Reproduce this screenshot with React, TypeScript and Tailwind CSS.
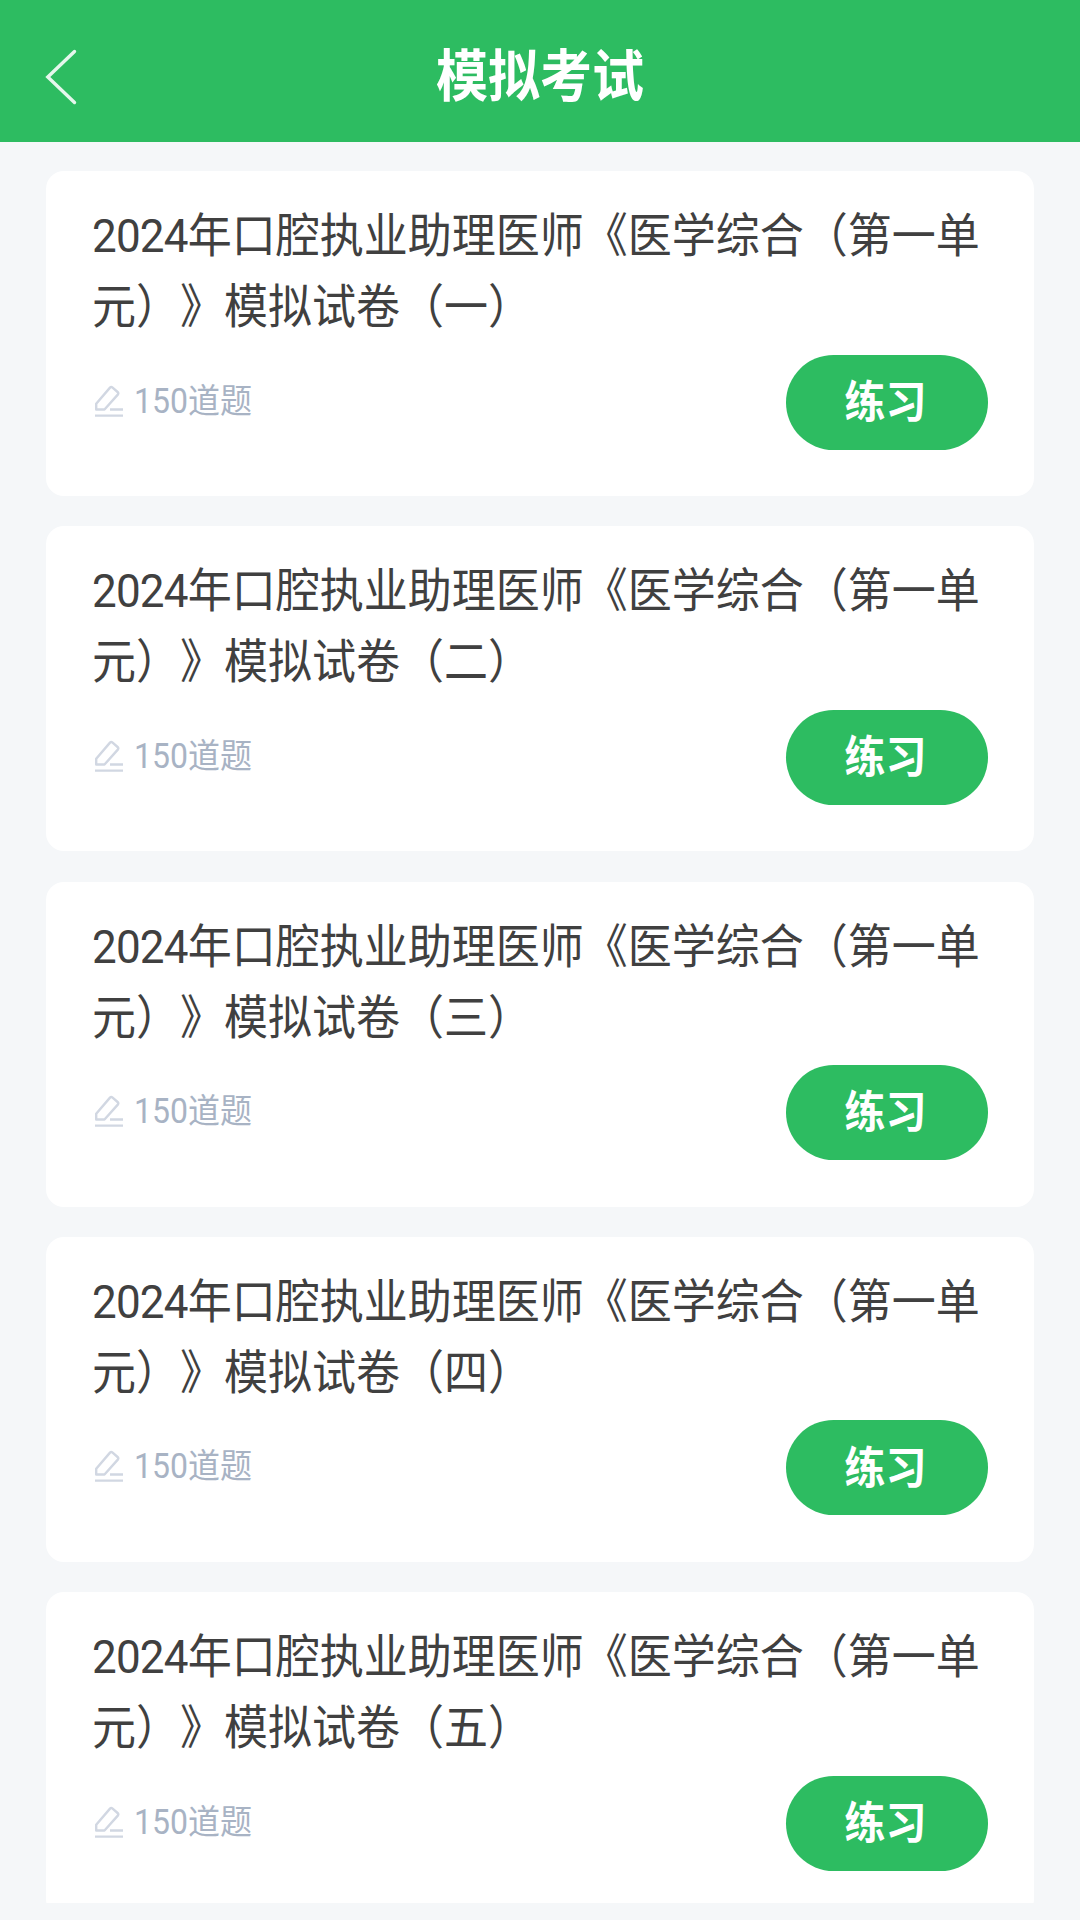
const papers = ["一", "二", "三", "四", "五"];

function BackIcon() {
  return (
    <svg className="w-[32px] h-[56px]" viewBox="0 0 32 56" fill="none" stroke="#fff" strokeOpacity="0.88" strokeWidth="3.4" strokeLinecap="round">
      <path d="M29.5 2.5 2.8 28 29.5 53.5" />
    </svg>
  );
}

function EditIcon() {
  return (
    <svg className="-mt-[3px] w-[30px] h-[32px] shrink-0" viewBox="0 0 30 32" fill="none" stroke="#d1d7e2" strokeWidth="2.4" strokeLinejoin="round">
      <path d="M2.2 24.5V18.8L16 2.6Q17.2 1.4 18.6 2.6L23.6 7Q25 8.2 23.8 9.6L10.5 24.5Z" />
      <path d="M16 24.5H29M1 30.6H29" />
    </svg>
  );
}

export default function App() {
  return (
    <main className="h-[1920px] w-[1080px] overflow-hidden bg-[#f5f7f9] font-[Roboto,'Noto_Sans_CJK_SC',sans-serif] [text-spacing-trim:space-all]">
      <header className="grid h-[141.5px] grid-cols-3 items-center bg-[#2dbc61] px-[45px]">
        <button className="mt-[13px] justify-self-start">
          <BackIcon />
        </button>
        <h1 className="mt-[14px] scale-y-[1.08] justify-self-center whitespace-nowrap text-[52px] leading-[70px] font-bold text-white">模拟考试</h1>
      </header>
      <div className="flex h-[1761.5px] flex-col gap-[30.3px] overflow-hidden px-[46px] pt-[29.5px]">
        {papers.map((no) => (
          <div key={no} className="h-[325px] shrink-0 rounded-[18px] bg-white pt-[30px] pr-[46px] pl-[46px]">
            <h2 className="w-[910px] origin-top scale-y-[1.07] text-[44px] leading-[66px] text-[#404040]">
              <span className="tracking-[-0.8px]">2024</span>
              {`年口腔执业助理医师《医学综合（第一单元）》模拟试卷（${no}）`}
            </h2>
            <div className="mt-[21.5px] flex h-[95px] items-center justify-between">
              <div className="flex items-center gap-[10px] pl-[2px] text-[#a8b3c4]">
                <EditIcon />
                <span className="-mt-[3px] scale-y-[1.07] text-[32px] leading-[44px]">150道题</span>
              </div>
              <button className="flex h-[95px] w-[202px] items-center justify-center rounded-full bg-[#2dbc61] pt-[3px] pr-[3px] text-[41px] font-bold text-white">
                <span className="scale-y-[1.07]">练习</span>
              </button>
            </div>
          </div>
        ))}
      </div>
    </main>
  );
}
